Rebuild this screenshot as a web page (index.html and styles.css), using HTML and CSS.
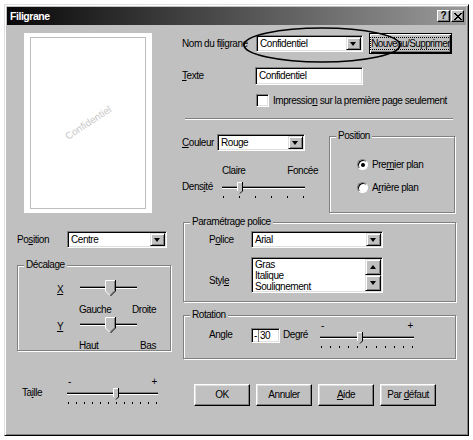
FILE: index.html
```html
<!DOCTYPE html>
<html lang="fr">
<head>
    <meta charset="UTF-8">
    <meta name="viewport" content="width=device-width, initial-scale=1.0">
    <title>Filigrane</title>
    <link rel="stylesheet" href="styles.css">
</head>
<body>
    <!-- slider thumbs, reused below -->
    <svg class="defs" width="0" height="0" aria-hidden="true">
        <symbol id="thumb-lg" viewBox="0 0 11 16">
            <polygon points="0,0 10,0 10,11 5,16 0,11" fill="#c0c0c0"/>
            <path d="M0.5 11V0.5H10" fill="none" stroke="#fff"/>
            <path d="M0.5 11L5 15.5" fill="none" stroke="#fff"/>
            <path d="M10.5 0V11L5.5 16" fill="none" stroke="#000"/>
            <path d="M9.5 1V10.6L5.3 14.8" fill="none" stroke="#808080"/>
        </symbol>
        <symbol id="thumb-sm" viewBox="0 0 6 12">
            <polygon points="0,0 6,0 6,9 3,12 0,9" fill="#c0c0c0"/>
            <path d="M0.5 9V0.5H6" fill="none" stroke="#fff"/>
            <path d="M5.5 0V9L3 11.5" fill="none" stroke="#000"/>
        </symbol>
    </svg>

    <div class="window">
        <div class="titlebar">
            <span class="title">Filigrane</span>
            <span class="tb-btn">?</span>
            <span class="tb-btn">
                <svg width="8" height="7" viewBox="0 0 8 7"><path d="M0 0L7 7M1 0L8 7M7 0L0 7M8 0L1 7" stroke="#000"/></svg>
            </span>
        </div>

        <div class="client">
            <div class="col-left">
                <div class="preview">
                    <div class="page"><span class="mark">Confidentiel</span></div>
                </div>

                <div class="row pos-row">
                    <span class="lbl lbl-pos">Po<u>s</u>ition</span>
                    <div class="field combo cb-pos"><span>Centre</span><span class="drop"></span></div>
                </div>

                <div class="group offset">
                    <span class="group-title">Décalage</span>
                    <div class="row axis">
                        <span class="axis-key"><u>X</u></span>
                        <div class="slider axis-slider">
                            <div class="track"></div>
                            <svg class="thumb lg" style="left: 25px"><use href="#thumb-lg"/></svg>
                        </div>
                    </div>
                    <div class="ends ends-axis"><span>Gauche</span><span>Droite</span></div>
                    <div class="row axis axis-y">
                        <span class="axis-key"><u>Y</u></span>
                        <div class="slider axis-slider">
                            <div class="track"></div>
                            <svg class="thumb lg" style="left: 25px"><use href="#thumb-lg"/></svg>
                        </div>
                    </div>
                    <div class="ends ends-axis ends-y"><span>Haut</span><span>Bas</span></div>
                </div>

                <div class="row size-row">
                    <span class="lbl lbl-size">Ta<u>i</u>lle</span>
                    <div class="scale scale-size">
                        <div class="signs"><span>-</span><span>+</span></div>
                        <div class="slider small">
                            <div class="track"></div>
                            <svg class="thumb sm" style="left: 46px"><use href="#thumb-sm"/></svg>
                        </div>
                        <div class="ticks"><i></i><i></i><i></i><i></i><i></i><i></i><i></i><i></i><i></i><i></i><i></i><i></i></div>
                    </div>
                </div>
            </div>

            <div class="col-right">
                <div class="row nom-row">
                    <span class="lbl lbl-nom">Nom du fi<u>l</u>igrane</span>
                    <div class="field combo cb-nom"><span>Confidentiel</span><span class="drop"></span></div>
                    <div class="btn btn-default btn-nom"><span class="focus">Nouveau/Supprimer</span></div>
                </div>
                <div class="row text-row">
                    <span class="lbl lbl-text"><u>T</u>exte</span>
                    <div class="field input-text">Confidentiel</div>
                </div>
                <div class="row check-row">
                    <span class="check"></span>
                    <span>Impressio<u>n</u> sur la première page seulement</span>
                </div>
                <div class="separator"></div>

                <div class="row middle">
                    <div class="colour">
                        <div class="row">
                            <span class="lbl lbl-colour"><u>C</u>ouleur</span>
                            <div class="field combo cb-colour"><span>Rouge</span><span class="drop"></span></div>
                        </div>
                        <div class="ends ends-density"><span>Claire</span><span>Foncée</span></div>
                        <div class="row density-row">
                            <span class="lbl lbl-density">Dens<u>i</u>té</span>
                            <div class="scale scale-density">
                                <div class="slider small">
                                    <div class="track"></div>
                                    <svg class="thumb sm" style="left: 15px"><use href="#thumb-sm"/></svg>
                                </div>
                                <div class="ticks"><i></i><i></i><i></i><i></i><i></i><i></i></div>
                            </div>
                        </div>
                    </div>
                    <div class="group layer">
                        <span class="group-title">Position</span>
                        <div class="radio-row"><span class="radio on"></span><span>Pre<u>m</u>ier plan</span></div>
                        <div class="radio-row"><span class="radio"></span><span>A<u>r</u>rière plan</span></div>
                    </div>
                </div>

                <div class="group font">
                    <span class="group-title">Paramétrage police</span>
                    <div class="row">
                        <span class="lbl lbl-font">P<u>o</u>lice</span>
                        <div class="field combo cb-font"><span>Arial</span><span class="drop"></span></div>
                    </div>
                    <div class="row style-row">
                        <span class="lbl lbl-font lbl-style">Styl<u>e</u></span>
                        <div class="field listbox">
                            <div class="items">
                                <span>Gras</span>
                                <span>Italique</span>
                                <span>Soulignement</span>
                            </div>
                            <div class="scroll">
                                <span class="arrow up"></span>
                                <span class="arrow"></span>
                            </div>
                        </div>
                    </div>
                </div>

                <div class="group rotation">
                    <span class="group-title">Rotation</span>
                    <div class="row angle-row">
                        <span class="lbl lbl-font lbl-angle">Angle</span>
                        <div class="field spin"><span class="sign">-</span>30</div>
                        <span class="lbl lbl-deg">Degré</span>
                        <div class="scale scale-angle">
                            <div class="signs"><span>-</span><span>+</span></div>
                            <div class="slider small">
                                <div class="track"></div>
                                <svg class="thumb sm" style="left: 37px"><use href="#thumb-sm"/></svg>
                            </div>
                            <div class="ticks"><i></i><i></i><i></i><i></i><i></i><i></i><i></i><i></i><i></i><i></i><i></i></div>
                        </div>
                    </div>
                </div>

                <div class="row buttons">
                    <div class="btn">OK</div>
                    <div class="btn">Annuler</div>
                    <div class="btn"><span><u>A</u>ide</span></div>
                    <div class="btn"><span>Par <u>d</u>éfaut</span></div>
                </div>
            </div>
        </div>

        <!-- hand-drawn ring around the watermark name -->
        <svg class="ring" width="162" height="40" viewBox="0 0 162 40">
            <ellipse cx="81" cy="19" rx="78" ry="17" fill="none" stroke="#000" stroke-width="1.6"/>
        </svg>
    </div>
</body>
</html>
```

FILE: styles.css
```css
* {
    box-sizing: border-box;
}

body {
    margin: 0;
    font-family: "Liberation Sans", Arial, sans-serif;
    font-size: 10px;
    letter-spacing: -0.45px;
    line-height: 12px;
    white-space: nowrap;
    color: #000;
    background: #fff;
}

u {
    text-underline-offset: 1px;
}

.defs {
    position: absolute;
}

/* window frame */
.window {
    position: relative;
    display: flex;
    flex-direction: column;
    width: 465px;
    height: 432px;
    margin: 4px 0 0 4px;
    padding: 2px;
    background: #c0c0c0;
    border: 1px solid;
    border-color: #dfdfdf #000 #000 #dfdfdf;
    box-shadow: inset 1px 1px #fff, inset -1px -1px #808080;
}

.titlebar {
    display: flex;
    align-items: center;
    gap: 1px;
    height: 18px;
    padding: 0 2px 0 3px;
    background: linear-gradient(to right, #080808, #9a9a9a);
}

.title {
    flex: 1;
    color: #fff;
    font-weight: bold;
    font-size: 10.5px;
}

.tb-btn {
    display: flex;
    align-items: center;
    justify-content: center;
    width: 13px;
    height: 12px;
    font-weight: bold;
    font-size: 10px;
    letter-spacing: 0;
    background: #c0c0c0;
    border: 1px solid;
    border-color: #fff #000 #000 #fff;
    box-shadow: inset -1px -1px #808080;
}

.client {
    display: flex;
    flex: 1;
}

.row {
    display: flex;
    align-items: center;
}

.lbl {
    flex: none;
}

.ring {
    position: absolute;
    left: 236px;
    top: 21px;
}

/* left column */
.col-left {
    width: 155px;
    margin-left: 10px;
}

.preview {
    width: 128px;
    height: 180px;
    margin: 8px 0 0 7px;
    padding: 4px 6px 4px 6px;
    background: #fff;
}

.page {
    display: flex;
    align-items: center;
    justify-content: center;
    height: 100%;
    border: 1px solid #bdbdbd;
}

.mark {
    font-size: 10px;
    letter-spacing: 0;
    color: #c8c8c8;
    transform: rotate(-33deg);
}

.pos-row {
    height: 17px;
    margin-top: 18px;
}

.lbl-pos {
    width: 50px;
}

.cb-pos {
    width: 100px;
}

/* etched group boxes */
.group {
    position: relative;
    border: 1px solid #808080;
    box-shadow: 1px 1px #fff, inset 1px 1px #fff;
}

.group-title {
    position: absolute;
    top: -7px;
    left: 6px;
    padding: 0 2px;
    background: #c0c0c0;
}

.offset {
    width: 154px;
    height: 86px;
    margin-top: 17px;
    padding: 14px 0 0 39px;
}

.axis-key {
    width: 23px;
    padding-top: 4px;
}

.axis-slider {
    width: 57px;
}

.ends {
    display: flex;
    justify-content: space-between;
}

.ends-axis {
    width: 77px;
    margin: 8px 0 0 22px;
}

.axis-y {
    margin-top: 1px;
}

.ends-y {
    margin-top: 7px;
}

.size-row {
    align-items: flex-start;
    margin-top: 27px;
}

.lbl-size {
    width: 45px;
    margin: 9px 0 0 5px;
}

.scale-size {
    width: 91px;
}

/* trackbars */
.slider {
    position: relative;
    height: 16px;
}

.slider.small {
    height: 12px;
}

.track {
    position: absolute;
    left: 0;
    right: 0;
    top: 6px;
    height: 3px;
    background: #000;
    border-top: 1px solid #808080;
    border-bottom: 1px solid #fff;
}

.small .track {
    top: 4px;
}

.thumb {
    position: absolute;
    top: 0;
}

.thumb.lg {
    width: 11px;
    height: 16px;
}

.thumb.sm {
    width: 6px;
    height: 12px;
}

.signs {
    display: flex;
    justify-content: space-between;
    height: 10px;
    line-height: 8px;
    padding: 0 1px;
}

.ticks {
    display: flex;
    justify-content: space-between;
    height: 2px;
    margin-top: 2px;
    padding: 0 1px;
}

.ticks i {
    width: 1px;
    height: 2px;
    background: #000;
}

/* sunken fields */
.field {
    display: flex;
    align-items: center;
    height: 17px;
    padding: 1px 2px 1px 3px;
    background: #fff;
    border: 1px solid;
    border-color: #808080 #fff #fff #808080;
    box-shadow: inset 1px 1px #000, inset -1px -1px #dfdfdf;
}

.combo {
    padding-right: 1px;
}

.drop,
.arrow {
    position: relative;
    flex: none;
    width: 15px;
    height: 13px;
    margin-left: auto;
    background: #c0c0c0;
    border: 1px solid;
    border-color: #dfdfdf #000 #000 #dfdfdf;
    box-shadow: inset 1px 1px #fff, inset -1px -1px #808080;
}

.drop::after,
.arrow::after {
    content: "";
    position: absolute;
    left: 3px;
    top: 4px;
    border-top: 4px solid #000;
    border-left: 3.5px solid transparent;
    border-right: 3.5px solid transparent;
}

.arrow.up::after {
    top: 4px;
    border-top: none;
    border-bottom: 4px solid #000;
}

/* right column */
.col-right {
    width: 274px;
    margin-left: 10px;
}

.nom-row {
    height: 21px;
    margin-top: 8px;
}

.lbl-nom {
    width: 74px;
}

.cb-nom {
    width: 107px;
}

.btn {
    display: flex;
    align-items: center;
    justify-content: center;
    width: 56px;
    height: 22px;
    background: #c0c0c0;
    border: 1px solid;
    border-color: #fff #000 #000 #fff;
    box-shadow: inset -1px -1px #808080, inset 1px 1px #dfdfdf;
}

.btn-default {
    border-color: #000;
    box-shadow: inset 1px 1px #fff, inset -1px -1px #000, inset -2px -2px #808080;
}

.btn-nom {
    width: 83px;
    height: 21px;
    margin-left: 6px;
    padding: 3px;
}

.btn-nom .focus {
    flex: 1;
    height: 100%;
    line-height: 11px;
    text-align: center;
    letter-spacing: -0.6px;
    border: 1px dotted #000;
}

.text-row {
    margin-top: 13px;
}

.lbl-text {
    width: 73px;
}

.input-text {
    width: 108px;
    height: 18px;
}

.check-row {
    height: 13px;
    margin-top: 9px;
    padding-left: 74px;
    gap: 4px;
}

.check {
    width: 13px;
    height: 13px;
    background: #fff;
    border: 1px solid;
    border-color: #808080 #fff #fff #808080;
    box-shadow: inset 1px 1px #000, inset -1px -1px #dfdfdf;
}

.separator {
    width: 268px;
    height: 2px;
    margin: 11px 0 0 3px;
    border-top: 1px solid #808080;
    border-bottom: 1px solid #fff;
}

.middle {
    align-items: flex-start;
    height: 78px;
    margin-top: 14px;
}

.colour {
    width: 147px;
}

.lbl-colour {
    width: 35px;
}

.cb-colour {
    width: 88px;
}

.ends-density {
    width: 96px;
    margin: 14px 0 0 40px;
}

.density-row {
    align-items: flex-start;
    margin-top: 5px;
}

.lbl-density {
    width: 40px;
    margin-top: -1px;
}

.scale-density {
    width: 83px;
}

.layer {
    width: 126px;
    height: 77px;
    margin-top: 2px;
    padding: 21px 0 0 27px;
}

.radio-row {
    display: flex;
    align-items: center;
    gap: 4px;
    height: 13px;
    margin-bottom: 10px;
}

.radio {
    position: relative;
    width: 11px;
    height: 11px;
    background: #fff;
    border-radius: 50%;
    border: 1px solid;
    border-color: #808080 #fff #fff #808080;
    box-shadow: inset 1px 1px #000;
}

.radio.on::after {
    content: "";
    position: absolute;
    left: 3px;
    top: 3px;
    width: 4px;
    height: 4px;
    border-radius: 50%;
    background: #000;
}

.font {
    width: 273px;
    height: 80px;
    margin: 10px 0 0 1px;
    padding: 8px 0 0 25px;
}

.lbl-font {
    width: 42px;
}

.cb-font {
    width: 132px;
}

.style-row {
    align-items: flex-start;
    margin-top: 9px;
}

.lbl-style {
    margin-top: 18px;
}

.listbox {
    align-items: stretch;
    width: 132px;
    height: 36px;
    padding: 1px 1px 1px 3px;
}

.items {
    display: flex;
    flex-direction: column;
    flex: 1;
    line-height: 11px;
    overflow: hidden;
}

.scroll {
    display: flex;
    flex-direction: column;
}

.scroll .arrow {
    width: 16px;
    height: 16px;
}

.scroll .arrow::after {
    left: 4px;
    top: 5px;
}

.rotation {
    width: 273px;
    height: 44px;
    margin: 13px 0 0 1px;
    padding: 6px 0 0 25px;
}

.angle-row {
    align-items: flex-start;
}

.lbl-angle {
    margin-top: 7px;
}

.spin {
    width: 29px;
    height: 15px;
    margin-top: 6px;
    padding-left: 2px;
}

.spin .sign {
    width: 5px;
    margin-right: 1px;
    border-right: 1px solid #808080;
}

.lbl-deg {
    width: 37px;
    margin: 7px 0 0 3px;
}

.scale-angle {
    width: 94px;
}

.buttons {
    gap: 6px;
    margin: 25px 0 0 12px;
}
```
